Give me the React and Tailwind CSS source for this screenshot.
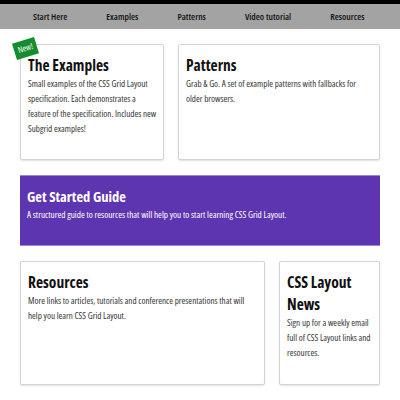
import React from 'react';

const font = { fontFamily: '"Open Sans", "DejaVu Sans", sans-serif' };

const navItems = ['Start Here', 'Examples', 'Patterns', 'Video tutorial', 'Resources'];

function Card({ title, children, className = 'pr-[4px]' }) {
  return (
    <div className={`bg-white border border-[#d4d4d4] rounded-[2px] shadow-[0_1px_2px_rgba(0,0,0,0.12)] pl-[7px] pt-[9px] ${className}`}>
      <h2 className="text-[15.5px] font-bold leading-[22px] text-[#111] [font-stretch:75%]">{title}</h2>
      <p className="text-[9.1px] leading-[15px] text-[#333] [font-stretch:75%]">{children}</p>
    </div>
  );
}

export default function App() {
  return (
    <div className="w-[400px] h-[400px] bg-white overflow-hidden" style={font}>
      <div className="h-[4px] bg-black" />
      <nav className="h-[25px] bg-[#a3a3a3] flex items-center">
        <ul className="flex gap-[39px] pl-[33px] text-[9.3px] font-semibold text-[#111] [font-stretch:75%]">
          {navItems.map((n) => (
            <li key={n}>{n}</li>
          ))}
        </ul>
      </nav>

      <div className="px-[20px] pt-[15px]">
        <div className="flex gap-[14px] h-[116px]">
          <div className="relative w-[144px]">
            <Card title="The Examples" className="h-full pr-[4px]">
              Small examples of the CSS Grid Layout specification. Each demonstrates a feature of the specification. Includes new Subgrid examples!
            </Card>
            <div className="absolute left-[-6px] top-[-4px] w-[23px] h-[17px] bg-[#138d2d] -rotate-[17deg] flex items-center justify-center">
              <span className="text-white text-[8.5px] [font-stretch:75%] leading-none">New!</span>
            </div>
          </div>
          <Card title="Patterns" className="flex-1 pr-[16px]">
            Grab &amp; Go. A set of example patterns with fallbacks for older browsers.
          </Card>
        </div>

        <div className="mt-[15px] h-[71px] bg-[#5e35b1] border-y border-[#9b85d6] px-[7px] pt-[11px]">
          <h2 className="text-[14.5px] font-bold leading-[20px] text-white [font-stretch:75%]">Get Started Guide</h2>
          <p className="text-[9.2px] leading-[14px] text-white mt-[1px] [font-stretch:75%]">
            A structured guide to resources that will help you to start learning CSS Grid Layout.
          </p>
        </div>

        <div className="flex gap-[14px] h-[124px] mt-[15px]">
          <Card title="Resources" className="w-[245px] pr-[4px]">
            More links to articles, tutorials and conference presentations that will help you learn CSS Grid Layout.
          </Card>
          <Card title="CSS Layout News" className="flex-1 pr-[4px]">
            Sign up for a weekly email full of CSS Layout links and resources.
          </Card>
        </div>
      </div>
    </div>
  );
}
